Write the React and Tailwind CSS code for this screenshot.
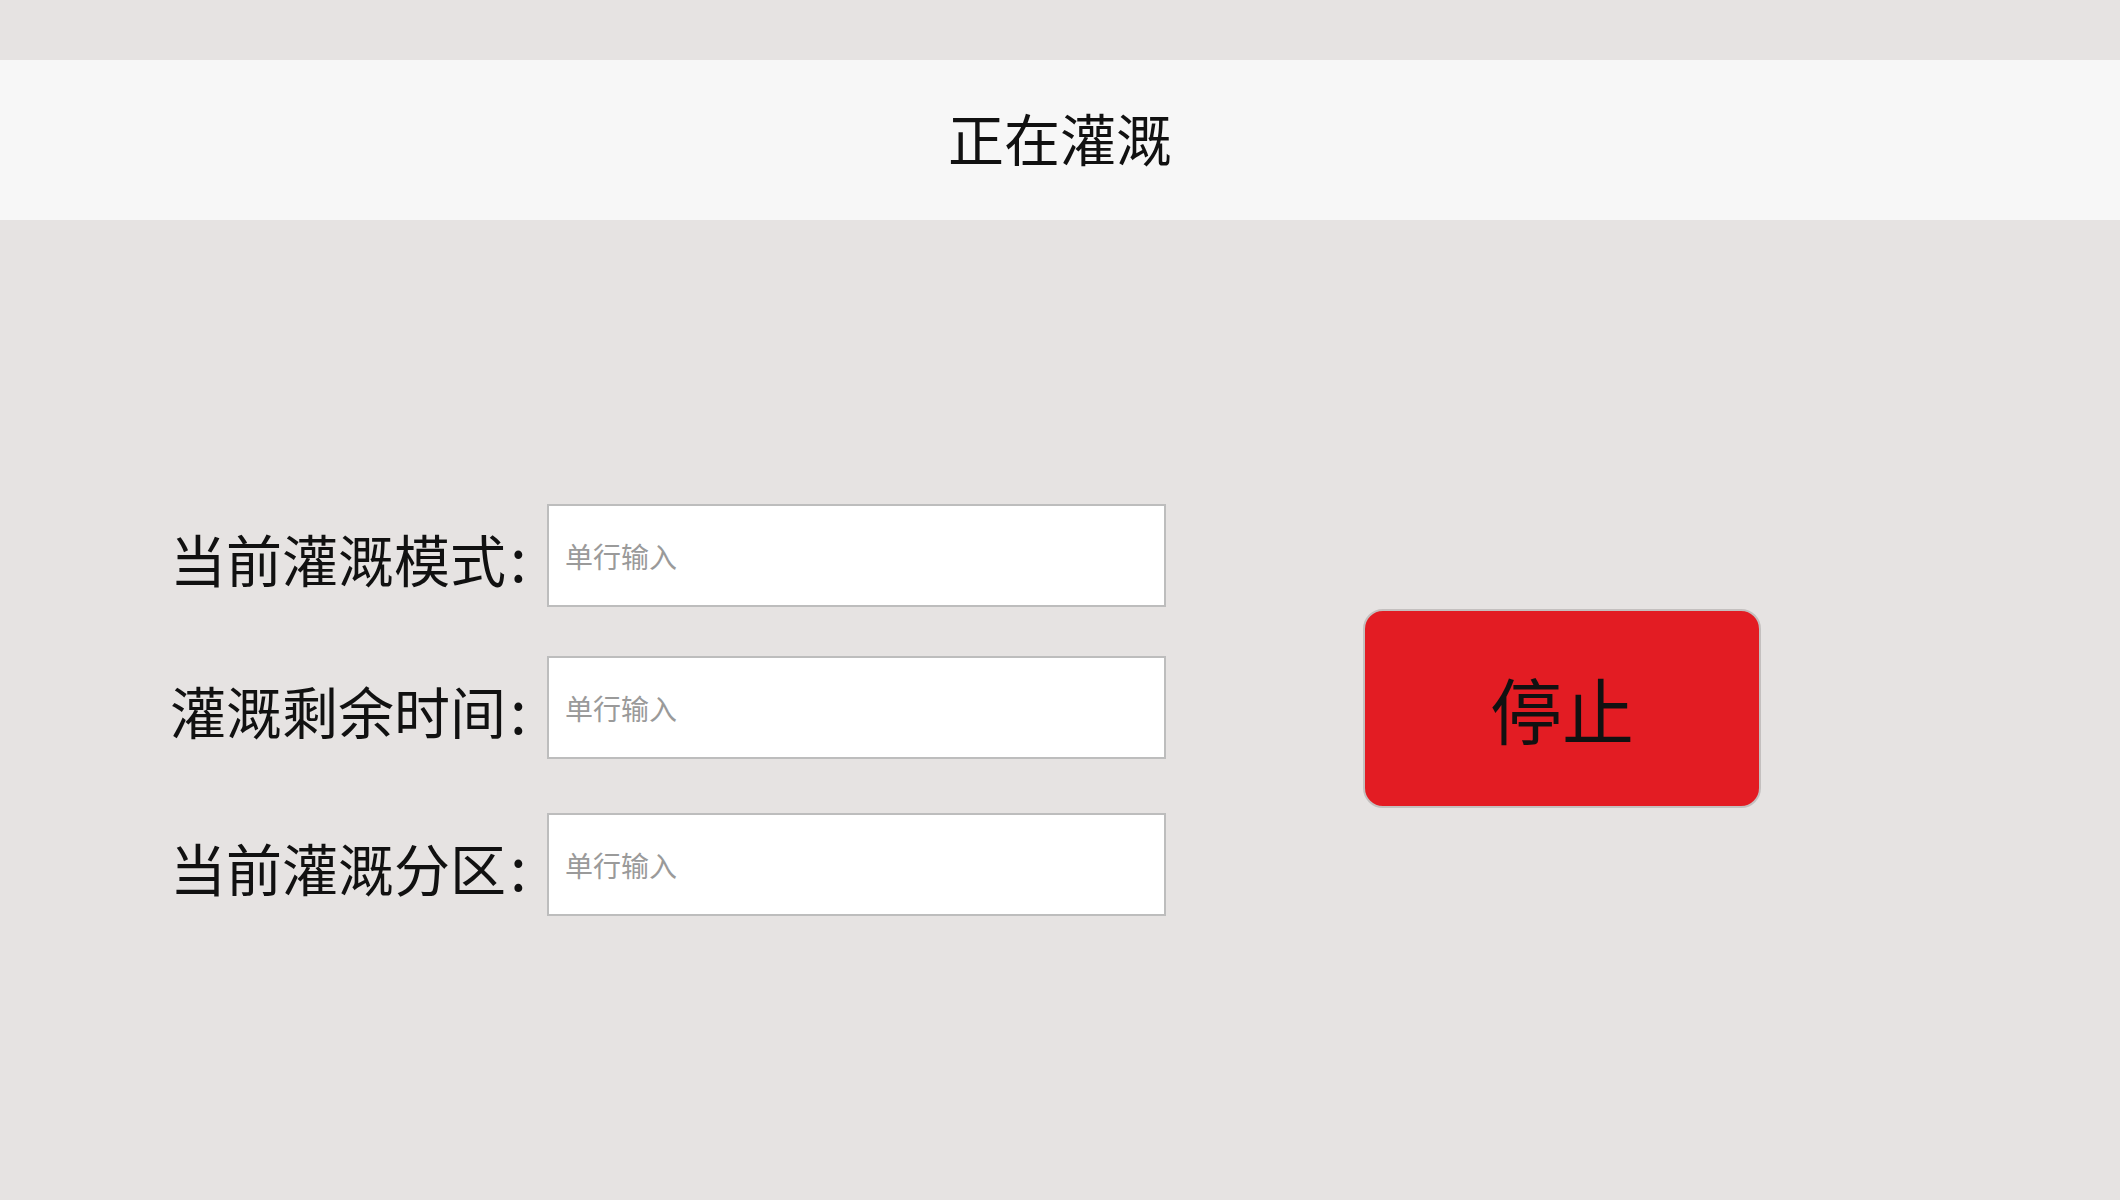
const fields = [
    { label: "当前灌溉模式", mt: "mt-0" },
    { label: "灌溉剩余时间", mt: "mt-[49px]" },
    { label: "当前灌溉分区", mt: "mt-[54px]" },
]

const App = () => {
    return (
        <div
            className="min-h-[1200px] w-full bg-[#e6e3e2] pt-[60px] text-[#111]"
            style={{ fontFamily: '"Noto Sans CJK SC", "Noto Sans", sans-serif' }}
        >
            {/* title bar */}
            <header className="h-[160px] bg-[#f7f7f7] flex items-center justify-center pb-[6px]">
                <h1 className="text-[56px] leading-none font-normal">正在灌溉</h1>
            </header>

            <div className="flex items-center pt-[284px] pl-[170px]">
                <div className="flex flex-col">
                    {fields.map((f) => (
                        <div key={f.label} className={`flex items-center ${f.mt}`}>
                            <label className="w-[377px] text-[56px] leading-none whitespace-nowrap">
                                {f.label}
                                <span className="text-[60px] pl-[4px]">:</span>
                            </label>
                            <input
                                type="text"
                                placeholder="单行输入"
                                className="w-[619px] h-[103px] bg-white border-2 border-[#bdbdbd] px-[16px] text-[28px] placeholder:text-[#9a9a9a] outline-none"
                            />
                        </div>
                    ))}
                </div>

                <button className="ml-[197px] mb-[4px] w-[398px] h-[199px] bg-[#e31c23] border-2 border-[#c4c0bf] rounded-[20px] text-[72px] leading-none text-[#111] flex items-center justify-center">
                    停止
                </button>
            </div>
        </div>
    )
}

export default App
